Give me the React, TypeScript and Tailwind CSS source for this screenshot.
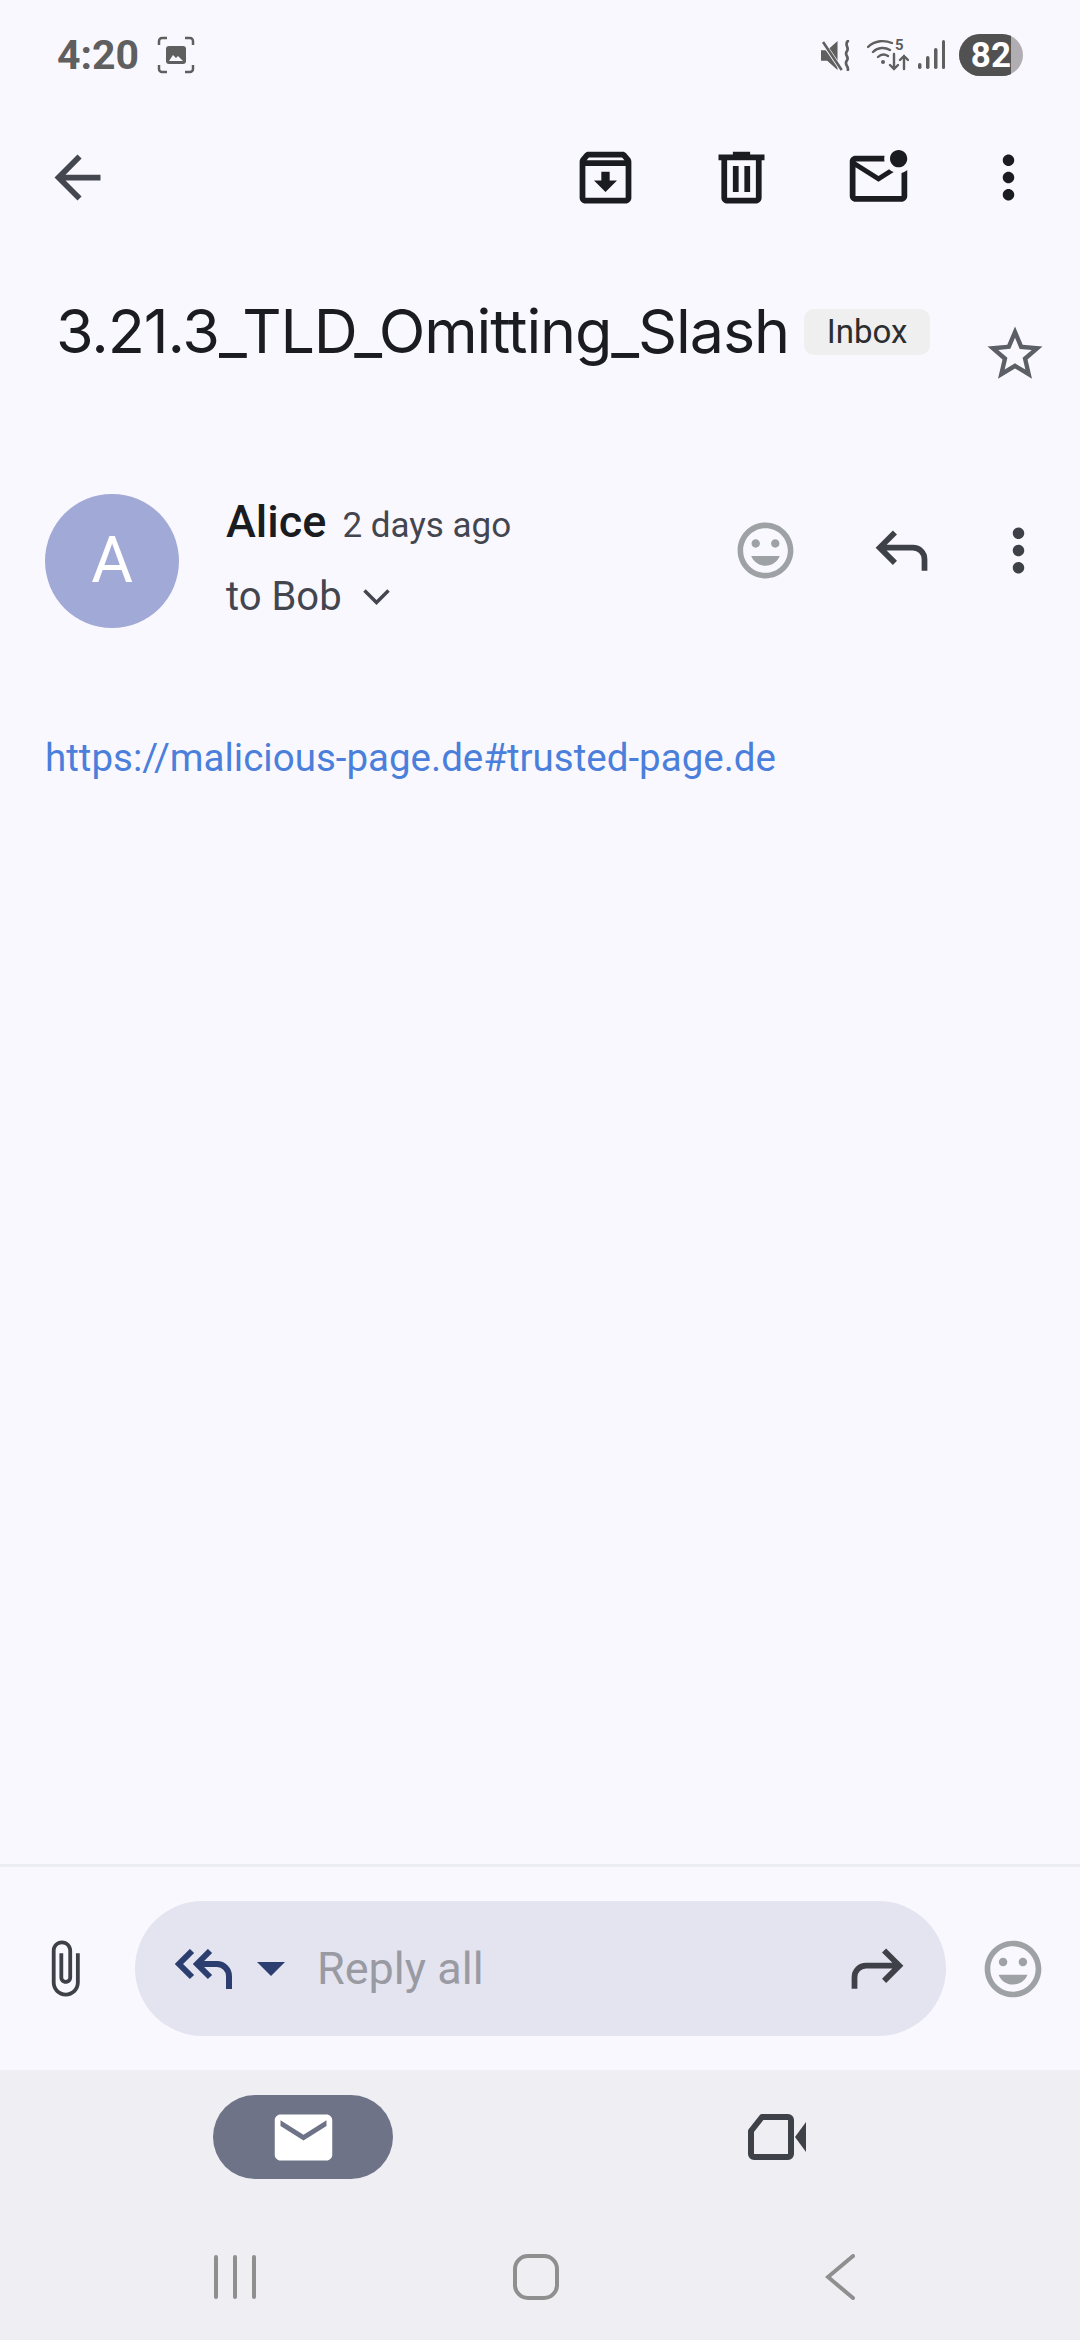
import React from 'react';

const MAT = {
  archive: 'M20.54 5.23l-1.39-1.68C18.88 3.21 18.47 3 18 3H6c-.47 0-.88.21-1.16.55L3.46 5.23C3.17 5.57 3 6.02 3 6.5V19c0 1.1.9 2 2 2h14c1.1 0 2-.9 2-2V6.5c0-.48-.17-.93-.46-1.27zM6.24 5h11.52l.83 1H5.42l.82-1zM5 19V8h14v11H5zm8.45-9h-2.9v3H8l4 4 4-4h-2.55z',
  trash: 'M15 4V3H9v1H4v2h1v13c0 1.1.9 2 2 2h10c1.1 0 2-.9 2-2V6h1V4h-5zm2 15H7V6h10v13zM9 8h2v9H9zm4 0h2v9h-2z',
  unread: 'M22 6.98V16c0 1.1-.9 2-2 2H4c-1.1 0-2-.9-2-2V4c0-1.1.9-2 2-2h10.1c-.06.32-.1.66-.1 1s.04.68.1 1H4l8 5 3.67-2.29c.47.43 1.02.76 1.63.98L12 11 4 6v10h16V7.97c.74-.15 1.42-.49 2-.99zM16 3c0 1.66 1.34 3 3 3s3-1.34 3-3-1.34-3-3-3-3 1.34-3 3z',
  dots: 'M12 8c1.1 0 2-.9 2-2s-.9-2-2-2-2 .9-2 2 .9 2 2 2zm0 2c-1.1 0-2 .9-2 2s.9 2 2 2 2-.9 2-2-.9-2-2-2zm0 6c-1.1 0-2 .9-2 2s.9 2 2 2 2-.9 2-2-.9-2-2-2z',
  back: 'M20 11H7.83l5.59-5.59L12 4l-8 8 8 8 1.41-1.41L7.83 13H20v-2z',
  star: 'M22 9.24l-7.19-.62L12 2 9.19 8.63 2 9.24l5.46 4.73L5.82 21 12 17.27 18.18 21l-1.63-7.03L22 9.24zM12 15.4l-3.76 2.27 1-4.28-3.32-2.88 4.38-.38L12 6.1l1.71 4.04 4.38.38-3.32 2.88 1 4.28L12 15.4z',
  emoji: 'M11.99 2C6.47 2 2 6.48 2 12s4.47 10 9.99 10C17.52 22 22 17.52 22 12S17.52 2 11.99 2zM12 20c-4.42 0-8-3.58-8-8s3.58-8 8-8 8 3.58 8 8-3.58 8-8 8zm3.5-9c.83 0 1.5-.67 1.5-1.5S16.33 8 15.5 8 14 8.67 14 9.5s.67 1.5 1.5 1.5zm-7 0c.83 0 1.5-.67 1.5-1.5S9.33 8 8.5 8 7 8.67 7 9.5 7.67 11 8.5 11zm3.5 6.5c2.33 0 4.31-1.46 5.11-3.5H6.89c.8 2.04 2.78 3.5 5.11 3.5z',
  reply: 'M19 19v-4q0-1.25-.875-2.125T16 12H6.825l3.6 3.6L9 17l-6-6 6-6 1.425 1.4-3.6 3.6H16q2.075 0 3.538 1.463T21 15v4z',
  clip: 'M16.5 6v11.5c0 2.21-1.79 4-4 4s-4-1.79-4-4V5c0-1.38 1.12-2.5 2.5-2.5s2.5 1.12 2.5 2.5v10.5c0 .55-.45 1-1 1s-1-.45-1-1V6H10v9.5c0 1.38 1.12 2.5 2.5 2.5s2.5-1.12 2.5-2.5V5c0-2.21-1.79-4-4-4S7 2.79 7 5v12.5c0 3.04 2.46 5.5 5.5 5.5s5.5-2.46 5.5-5.5V6h-1.5z',
  mail: 'M20 4H4c-1.1 0-2 .9-2 2v12c0 1.1.9 2 2 2h16c1.1 0 2-.9 2-2V6c0-1.1-.9-2-2-2zm0 4l-8 5-8-5V6l8 5 8-5v2z',
};

function Mat({ d, className }: { d: string; className: string }) {
  return (
    <svg viewBox="0 0 24 24" fill="currentColor" className={className}>
      <path d={d} />
    </svg>
  );
}

function StatusBar() {
  return (
    <div className="h-[110px] flex items-center pl-[57px] pr-[57px] text-[#5f5f5f]">
      <span className="text-[41px] font-bold leading-none font-['Roboto',sans-serif]">4:20</span>
      <svg viewBox="0 0 38 38" className="w-[38px] h-[38px] ml-[18px]" fill="none" stroke="currentColor" strokeWidth="2.5">
        <path d="M2 9V5a3 3 0 0 1 3-3h5M28 2h5a3 3 0 0 1 3 3v4M36 29v4a3 3 0 0 1-3 3h-5M10 36H5a3 3 0 0 1-3-3v-4" />
        <rect x="9" y="10" width="20" height="18" rx="3" fill="currentColor" stroke="none" />
        <path d="M12 25l4-6 3 3 2-2 5 5z" fill="#faf8ff" stroke="none" />
      </svg>
      <div className="ml-auto flex items-center">
        <svg viewBox="0 0 30 30" className="w-[31px] h-[31px]" fill="none">
          <path d="M0 10h6l10-9v28L6 20H0z" fill="currentColor" />
          <path d="M1 1l19 28" stroke="#faf8ff" strokeWidth="4" />
          <path d="M2 2l18 27" stroke="currentColor" strokeWidth="2.5" />
          <path d="M26 1c-4 4 2 6-1 10s3 5 0 9 2 5 1 9" stroke="currentColor" strokeWidth="2.6" strokeLinecap="round" />
        </svg>
        <div className="relative ml-[15px] w-[42px] h-[32px]">
          <svg viewBox="0 0 42 32" className="w-[42px] h-[32px]" fill="none" stroke="currentColor" strokeWidth="2.4" strokeLinecap="round">
            <path d="M1 8c7-7 17-7 24-4M6 13c5-5 12-5 17-2M11 18c3-3 7-3 10-1" />
            <circle cx="16" cy="23" r="2" fill="currentColor" stroke="none" />
            <path d="M27 15v15M23 26l4 4 4-4M37 30V17M33 21l4-4 4 4" />
          </svg>
          <span className="absolute left-[28px] -top-[1px] text-[15px] leading-[15px] font-bold">5</span>
        </div>
        <svg viewBox="0 0 27 30" className="w-[27px] h-[30px] ml-[9px]" fill="currentColor">
          <rect x="0" y="23" width="3.5" height="6" rx="1.7" />
          <rect x="8" y="16" width="3.5" height="13" rx="1.7" />
          <rect x="16" y="8" width="3.5" height="21" rx="1.7" />
          <rect x="24" y="0" width="3" height="29" rx="1.5" />
        </svg>
        <div className="ml-[14px] w-[64px] h-[42px] rounded-full bg-[#b0adb3] overflow-hidden">
          <div className="w-[52px] h-full bg-[#515151] flex items-center justify-end text-white text-[35px] font-bold font-['Roboto',sans-serif] leading-none">
            82
          </div>
        </div>
      </div>
    </div>
  );
}

function Toolbar() {
  return (
    <div className="h-[134px] flex items-center text-[#1b1c20]">
      <Mat d={MAT.back} className="w-[69px] h-[69px] ml-[43px] text-[#444650]" />
      <Mat d={MAT.archive} className="w-[69px] h-[69px] ml-[459px]" />
      <Mat d={MAT.trash} className="w-[69px] h-[69px] ml-[67px]" />
      <Mat d={MAT.unread} className="w-[69px] h-[69px] ml-[68px] mt-[14px]" />
      <Mat d={MAT.dots} className="w-[69px] h-[69px] ml-[61px]" />
    </div>
  );
}

function ReplyAllIcon() {
  return (
    <svg viewBox="0 0 57 40" className="w-[57px] h-[40px]" fill="none" stroke="#2c3e70" strokeWidth="6">
      <path d="M17 2L4 15l13 13M35 2L22 15l13 13M22 15h20a12 12 0 0 1 12 12v13" />
    </svg>
  );
}

function VideoIcon() {
  return (
    <svg viewBox="0 0 58 46" className="w-[58px] h-[46px]">
      <path d="M14 3h26a3 3 0 0 1 3 3v34a3 3 0 0 1-3 3H6a3 3 0 0 1-3-3V17z" fill="none" stroke="#3f4148" strokeWidth="6" strokeLinejoin="round" />
      <path d="M47 23L58 8v30z" fill="#3f4148" />
    </svg>
  );
}

export default function App() {
  return (
    <div className="w-[1080px] h-[2340px] flex flex-col bg-[#faf8ff] font-['Roboto',sans-serif] overflow-hidden">
      <StatusBar />
      <Toolbar />

      {/* subject */}
      <div className="flex items-start pl-[56px] mt-[52px]">
        <h1 className="text-[61px] leading-[70px] font-normal text-[#1b1c20] font-['Inter',sans-serif] tracking-[-1.1px] whitespace-nowrap">
          3.21.3_TLD_Omitting_Slash
        </h1>
        <span className="ml-[15px] mt-[13px] h-[46px] w-[126px] rounded-[10px] bg-[#eeefee] flex items-center justify-center text-[33px] text-[#2c2d30]">
          Inbox
        </span>
        <Mat d={MAT.star} className="w-[66px] h-[66px] ml-[52px] mt-[25px] text-[#5c5f66]" />
      </div>

      {/* sender */}
      <div className="flex items-start pl-[45px] pr-[27px] mt-[107px]">
        <div className="w-[134px] h-[134px] rounded-full bg-[#a1a9d6] flex items-center justify-center text-white text-[64px]">
          A
        </div>
        <div className="ml-[47px] flex flex-col">
          <div className="flex items-baseline">
            <span className="text-[45px] leading-[56px] font-medium text-[#1b1c20]">Alice</span>
            <span className="ml-[16px] text-[35px] text-[#44464f]">2 days ago</span>
          </div>
          <div className="flex items-center mt-[22px]">
            <span className="text-[40px] leading-[44px] text-[#44464f]">to Bob</span>
            <svg viewBox="0 0 27 18" className="w-[27px] h-[18px] ml-[21px]" fill="none" stroke="#44464f" strokeWidth="3.5">
              <path d="M1.5 2.5L13.5 14.5L25.5 2.5" />
            </svg>
          </div>
        </div>
        <Mat d={MAT.emoji} className="w-[67px] h-[67px] ml-auto mt-[23px] text-[#9ea2a5]" />
        <Mat d={MAT.reply} className="w-[69px] h-[69px] ml-[68px] mt-[22px] text-[#3f4148]" />
        <Mat d={MAT.dots} className="w-[69px] h-[69px] ml-[48px] mt-[22px] text-[#3f4148]" />
      </div>

      {/* body */}
      <div className="flex-1 pl-[45px] pt-[105px]">
        <a className="text-[38.5px] leading-[50px] text-[#4a7fdb]">https://malicious-page.de#trusted-page.de</a>
      </div>

      {/* composer */}
      <div className="border-t-[3px] border-[#ecedf2] h-[206px] flex items-center">
        <Mat d={MAT.clip} className="w-[61px] h-[61px] ml-[34px] text-[#3f4148]" />
        <div className="ml-[40px] w-[811px] h-[135px] rounded-full bg-[#e3e4ef] flex items-center">
          <div className="ml-[40px]"><ReplyAllIcon /></div>
          <svg viewBox="0 0 28 14" className="w-[28px] h-[14px] ml-[25px]" fill="#2c3e70">
            <path d="M0 0h28L14 14z" />
          </svg>
          <span className="ml-[32px] text-[45px] text-[#9a9aa3]">Reply all</span>
          <Mat d={MAT.reply} className="w-[69px] h-[69px] ml-auto mr-[34px] -scale-x-100 text-[#3f4148]" />
        </div>
        <Mat d={MAT.emoji} className="w-[68px] h-[68px] ml-[33px] text-[#9ea2a5]" />
      </div>

      {/* bottom tabs */}
      <div className="h-[270px] bg-[#eeeef3] flex flex-col">
        <div className="flex items-center pt-[25px]">
          <div className="ml-[213px] w-[180px] h-[84px] rounded-full bg-[#6e7387] flex items-center justify-center text-white">
            <Mat d={MAT.mail} className="w-[69px] h-[69px]" />
          </div>
          <div className="ml-[355px]"><VideoIcon /></div>
        </div>
        <div className="flex items-center mt-[75px]">
          <svg viewBox="0 0 42 44" className="w-[42px] h-[44px] ml-[214px]" stroke="#8f8f8f" strokeWidth="4" strokeLinecap="round">
            <path d="M2 2v40M21 2v40M40 2v40" />
          </svg>
          <svg viewBox="0 0 46 46" className="w-[46px] h-[46px] ml-[257px]" fill="none" stroke="#8f8f8f" strokeWidth="4">
            <rect x="2" y="2" width="42" height="42" rx="13" />
          </svg>
          <svg viewBox="0 0 30 46" className="w-[30px] h-[46px] ml-[266px]" fill="none" stroke="#8f8f8f" strokeWidth="4" strokeLinecap="round">
            <path d="M28 2L3 23l25 21" />
          </svg>
        </div>
      </div>
    </div>
  );
}
